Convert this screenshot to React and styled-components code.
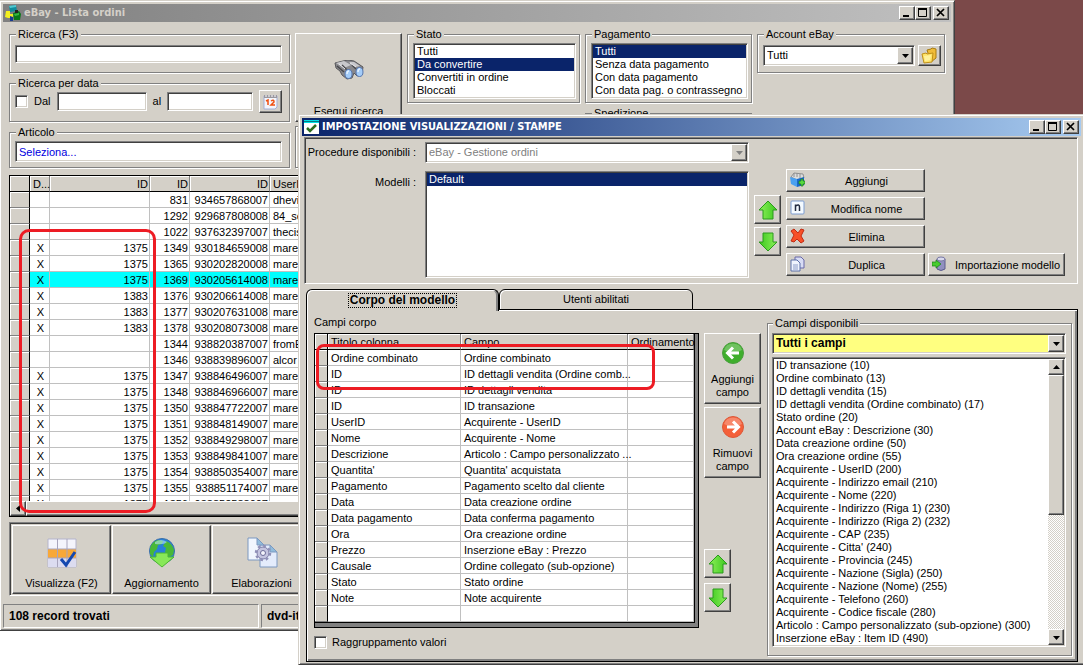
import React from 'react'
import styled, { createGlobalStyle, css } from 'styled-components'

const face = '#d4d0c8'
const navy = '#0a246a'

const GlobalStyle = createGlobalStyle`
  * {
    box-sizing:border-box;
  }
  body {
    margin:0;
    font-family:"Liberation Sans", Arial, sans-serif;
    font-size:11px;
    line-height:13px;
    color:#000;
  }
  button, input, select {
    font:inherit;
    color:inherit;
    margin:0;
    border-radius:0;
  }
  ul {
    list-style:none;
    margin:0;
    padding:0;
  }
`

const raised = css`
  background:${face};
  border:1px solid;
  border-color:#fff #404040 #404040 #fff;
  box-shadow:inset -1px -1px 0 #808080;
`

const sunken = css`
  background:#fff;
  border:1px solid;
  border-color:#808080 #fff #fff #808080;
  box-shadow:inset 1px 1px 0 #404040, inset -1px -1px 0 ${face};
  padding:1px;
`

const Desktop = styled.div`
  position:relative;
  min-height:100vh;
  overflow:hidden;
  background:linear-gradient(to bottom, #7b4949 0 631px, #fff 631px);
`

const Window = styled.section`
  position:absolute;
  display:flex;
  flex-direction:column;
  background:${face};
  border:1px solid;
  border-color:${face} #404040 #404040 ${face};
  box-shadow:inset 1px 1px 0 #fff, inset -1px -1px 0 #808080;
  padding:3px 3px 2px;
`

const MainWindow = styled(Window)`
  left:-1px;
  right:128px;
  top:0;
`

const DialogWindow = styled(Window)`
  left:298px;
  right:-2px;
  top:114px;
`

const TitleBar = styled.header`
  display:flex;
  align-items:center;
  height:18px;
  padding:0 2px;
  gap:3px;
  color:${p => (p.$active ? '#fff' : face)};
  background:${p => (p.$active
    ? 'linear-gradient(to right, #0a246a, #a6caf0)'
    : 'linear-gradient(to right, #808080, #c0c0c0)')};
  h1 {
    flex:1;
    margin:0;
    font-family:"DejaVu Sans Condensed", "Noto Sans", sans-serif;
    font-size:11px;
    line-height:14px;
    font-weight:700;
    white-space:nowrap;
  }
`

const CaptionButtons = styled.div`
  display:flex;
  button:last-child {
    margin-left:2px;
  }
`

const CaptionButton = styled.button`
  ${raised}
  width:16px;
  height:14px;
  padding:0;
  display:flex;
  align-items:center;
  justify-content:center;
`

const Button = styled.button`
  ${raised}
  display:flex;
  flex-direction:${p => (p.$stack ? 'column' : 'row')};
  align-items:center;
  justify-content:center;
  padding:0;
  flex:none;
  width:${p => (p.$w ? `${p.$w}px` : 'auto')};
  height:${p => p.$h}px;
`

const Group = styled.fieldset`
  min-width:0;
  margin:0;
  border:1px solid #808080;
  box-shadow:1px 1px 0 #fff, inset 1px 1px 0 #fff;
  padding:${p => p.$top || 0}px ${p => p.$right || 3}px 3px 5px;
  height:${p => (p.$h ? `${p.$h}px` : 'auto')};
  flex:${p => (p.$grow ? 1 : 'none')};
  legend {
    padding:0 2px;
    margin-left:1px;
    line-height:12px;
    min-height:12px;
    background:${face};
  }
`

const Line = styled.div`
  display:flex;
  align-items:center;
  gap:${p => p.$gap || 0}px;
`

const TextBox = styled.input`
  ${sunken}
  width:${p => (p.$w ? `${p.$w}px` : '100%')};
  height:${p => p.$h}px;
  padding:0 3px;
  color:${p => (p.$link ? '#0000e0' : '#000')};
  outline:none;
`

const Check = styled.input`
  ${sunken}
  appearance:none;
  width:13px;
  height:13px;
  flex:none;
`

const ComboFrame = styled.div`
  ${sunken}
  display:flex;
  flex:1;
  min-width:0;
  height:21px;
  background:${p => p.$fill || '#fff'};
  select {
    appearance:none;
    flex:1;
    min-width:0;
    border:0;
    padding:0 2px;
    background:transparent;
    font-weight:${p => (p.$bold ? 700 : 400)};
    font-size:${p => (p.$bold ? 12 : 11)}px;
    opacity:1;
    outline:none;
  }
  select:disabled {
    color:#808080;
  }
`

const ArrowBox = styled.span`
  ${raised}
  width:16px;
  display:flex;
  align-items:center;
  justify-content:center;
`

const ListFrame = styled.div`
  ${sunken}
  display:flex;
  min-height:${p => p.$h}px;
  ul {
    flex:1;
    min-width:0;
  }
`

const ListItem = styled.li`
  height:13px;
  padding:0 2px;
  white-space:nowrap;
  overflow:hidden;
  background:${p => (p.$on ? navy : 'transparent')};
  color:${p => (p.$on ? '#fff' : '#000')};
`

const MainBody = styled.div`
  display:flex;
  flex-direction:column;
  padding:6px 6px 0;
`

const Filters = styled.div`
  display:grid;
  grid-template-columns:281px 107px 173px 167px 188px;
  column-gap:5px;
  height:140px;
  margin-bottom:7px;
`

const FilterColumn = styled.div`
  display:flex;
  flex-direction:column;
  gap:4px;
  padding-top:${p => p.$top || 0}px;
`

const GridFrame = styled.div`
  border:1px solid #000;
  height:342px;
  display:flex;
  flex-direction:column;
`

const GridView = styled.div`
  flex:1;
  overflow:hidden;
  background:#fff;
`

const DataTable = styled.table`
  table-layout:fixed;
  width:100%;
  border-collapse:separate;
  border-spacing:0;
  background:#fff;
  th, td {
    height:16px;
    padding:1px 1px 0 3px;
    line-height:14px;
    font-weight:400;
    text-align:left;
    white-space:nowrap;
    border-right:1px solid #c0c0c0;
    border-bottom:1px solid #c0c0c0;
  }
  th {
    background:${face};
    box-shadow:inset 1px 1px 0 #fff;
  }
  thead th {
    border-right-color:#808080;
    border-bottom-color:#000;
  }
  th:first-child {
    border-right-color:#000;
  }
  tbody th {
    border-bottom-color:#808080;
  }
  .num {
    text-align:right;
  }
  .mark {
    text-align:center;
  }
`

const Row = styled.tr`
  td {
    background:${p => (p.$on ? '#00ffff' : 'transparent')};
  }
`

const HScroll = styled.div`
  display:flex;
  height:15px;
  background:#e9e7e3;
  button {
    ${raised}
    width:16px;
    padding:0;
    display:flex;
    align-items:center;
    justify-content:center;
  }
  span {
    ${raised}
    flex:1;
  }
`

const Toolbar = styled.div`
  display:flex;
  gap:1px;
  margin-top:5px;
  padding:1px 2px;
  border:1px solid;
  border-color:#808080 #fff #fff #808080;
  box-shadow:inset 1px 1px 0 #404040;
  height:74px;
`

const ToolButton = styled.button`
  ${raised}
  width:99px;
  margin:1px 0 0 0;
  padding:11px 0 0;
  display:flex;
  flex-direction:column;
  align-items:center;
  gap:8px;
`

const SearchButton = styled(ToolButton)`
  width:100%;
  height:89px;
  margin:0;
  padding-top:26px;
  gap:25px;
`

const StatusBar = styled.footer`
  display:flex;
  gap:2px;
  margin-top:8px;
`

const StatusCell = styled.div`
  width:${p => (p.$w ? `${p.$w}px` : 'auto')};
  flex:${p => (p.$w ? 'none' : 1)};
  height:24px;
  padding:5px;
  font-size:12px;
  font-weight:700;
  border:1px solid;
  border-color:#808080 #fff #fff #808080;
`

const Marker = styled.div`
  position:absolute;
  left:${p => p.$x}px;
  top:${p => p.$y}px;
  width:${p => p.$w}px;
  height:${p => p.$h}px;
  border:3px solid #ed1c24;
  border-radius:${p => p.$r}px;
  pointer-events:none;
`

const DialogBody = styled.div`
  padding:1px 3px 0 2px;
`

const ModelPanel = styled.div`
  display:grid;
  grid-template-columns:110px 1fr 27px auto;
  column-gap:5px;
  height:147px;
  padding:4px 12px 0 1px;
  border:1px solid;
  border-color:#808080 #fff #fff #808080;
  box-shadow:inset 1px 1px 0 #404040;
`

const Labels = styled.div`
  display:flex;
  flex-direction:column;
  align-items:flex-end;
  gap:17px;
  padding-top:4px;
  white-space:nowrap;
`

const Fields = styled.div`
  display:flex;
  flex-direction:column;
  gap:8px;
  padding-left:4px;
  > :first-child {
    flex:none;
  }
`

const ButtonStack = styled.div`
  display:flex;
  flex-direction:column;
  gap:${p => p.$gap}px;
  padding-top:${p => p.$top || 0}px;
`

const Actions = styled.div`
  display:grid;
  grid-template-columns:139px 137px;
  grid-auto-rows:23px;
  gap:5px 3px;
  padding-top:27px;
`

const ActionButton = styled.button`
  ${raised}
  grid-column:${p => (p.$side ? 2 : 1)};
  padding:0 0 0 3px;
  display:flex;
  gap:4px;
  white-space:nowrap;
  svg {
    flex:none;
    margin-top:2px;
  }
  span {
    flex:1;
    line-height:22px;
    text-align:center;
  }
`

const Tabs = styled.div`
  display:flex;
  margin:5px 0 0 2px;
  height:20px;
`

const Tab = styled.button`
  position:relative;
  width:${p => (p.$on ? 193 : 194)}px;
  height:${p => (p.$on ? 22 : 21)}px;
  padding:0;
  background:${face};
  border:1px solid #000;
  border-bottom:${p => (p.$on ? '0' : '1px solid #000')};
  border-radius:6px 6px 0 0;
  box-shadow:inset 1px 1px 0 #fff, inset -2px 0 0 ${p => (p.$on ? '#808080' : face)};
  z-index:${p => (p.$on ? 1 : 0)};
  font-size:${p => (p.$on ? 12 : 11)}px;
  font-weight:${p => (p.$on ? 700 : 400)};
  span {
    display:inline-block;
    outline:${p => (p.$on ? '1px dotted #000' : 'none')};
    padding:0 1px;
  }
`

const TabPage = styled.div`
  display:grid;
  grid-template-columns:385px 57px 1fr;
  column-gap:5px;
  margin-left:2px;
  height:353px;
  padding:6px 4px 0 7px;
  border:1px solid #000;
  box-shadow:inset 1px 1px 0 #fff, inset -2px -2px 0 #808080;
`

const FieldsColumn = styled.div`
  h2 {
    margin:0 0 4px;
    font-size:11px;
    font-weight:400;
  }
  > label {
    display:flex;
    align-items:center;
    gap:5px;
    margin-top:8px;
  }
`

const FieldsFrame = styled.div`
  border:1px solid #000;
  background:#808080;
  padding:0 3px 4px 0;
  table {
    border-right:1px solid #000;
    border-bottom:1px solid #000;
  }
`

const MoveColumn = styled.div`
  display:flex;
  flex-direction:column;
  gap:3px;
  padding-top:17px;
`

const Spacer = styled.div`
  height:65px;
`

const MoveButton = styled(Button)`
  gap:8px;
  padding-top:3px;
`

const ButtonLabel = styled.span`
  text-align:center;
`

const AvailableGroup = styled(Group)`
  height:339px;
  margin:1px 1px 0 1px;
  padding:4px 5px 0 4px;
`

const AvailableBody = styled.div`
  display:flex;
  flex-direction:column;
  gap:3px;
  > :first-child {
    flex:none;
  }
`

const VScroll = styled.div`
  width:16px;
  display:flex;
  flex-direction:column;
  background-color:#fff;
  background-image:conic-gradient(${face} 25%, #fff 0 50%, ${face} 0 75%, #fff 0);
  background-size:2px 2px;
  button {
    ${raised}
    height:16px;
    padding:0;
    display:flex;
    align-items:center;
    justify-content:center;
  }
  span {
    ${raised}
    height:140px;
    margin-bottom:auto;
  }
`

const Triangle = ({ d = 'down', color = '#000' }) => {
  const shapes = {
    down: 'M0 2h7L3.5 6z',
    up: 'M0 5h7L3.5 1z',
    left: 'M5 0v7L1 3.5z',
  }
  return (
    <svg width="7" height="7" viewBox="0 0 7 7" aria-hidden="true">
      <path d={shapes[d]} fill={color} />
    </svg>
  )
}

const Arrow = ({ down }) => (
  <svg width="20" height="20" viewBox="0 0 20 20" aria-hidden="true">
    <defs>
      <linearGradient id="arrowFill" x1="0" y1="0" x2="1" y2="0">
        <stop offset="0" stopColor="#8df05a" />
        <stop offset="1" stopColor="#3cc81e" />
      </linearGradient>
    </defs>
    <path
      d="M10 1L19 10H15V19H5V10H1Z"
      transform={down ? 'rotate(180 10 10)' : undefined}
      fill="url(#arrowFill)"
      stroke="#2a9a1c"
      strokeLinejoin="round"
    />
  </svg>
)

const RoundArrow = ({ right }) => (
  <svg width="24" height="24" viewBox="0 0 24 24" aria-hidden="true">
    <circle cx="12" cy="12" r="10.5" fill={right ? '#f4603a' : '#3fae2c'} stroke={right ? '#dd5838' : '#4a9e3e'} />
    <path d="M3 9a9.500 9.500 0 0 1 18 0q-9 5-18 0z" fill="#fff" opacity="0.250" />
    <path
      d="M18 12H7M12 6.500L6.500 12L12 17.500"
      transform={right ? 'rotate(180 12 12)' : undefined}
      fill="none"
      stroke="#fff"
      strokeWidth="3"
    />
  </svg>
)

const AppIcon = () => (
  <svg width="16" height="16" viewBox="0 0 16 16" aria-hidden="true">
    <path d="M4 1l7-1 1 6-7 1z" fill="#108c9c" />
    <path d="M4 1l7-1v2L5 3z" fill="#50c8d0" />
    <path d="M8 8l6-2 2 3-1 6H9z" fill="#087818" />
    <path d="M9 9l5-1v2l-4 1z" fill="#38b840" />
    <path d="M1 6h4v3h3v4H3l-3-1z" fill="#f4f020" />
    <path d="M5 11l3 1v4H5z" fill="#183c90" />
    <path d="M10 5h3v3h-3z" fill="#222" />
  </svg>
)

const FormIcon = () => (
  <svg width="15" height="14" viewBox="0 0 15 14" aria-hidden="true">
    <path d="M0 0h15v14H0z" fill="#fff" />
    <path d="M0 0h15v3H0z" fill="#00e0e8" />
    <path d="M0 1.500h15" stroke="#087880" />
    <path d="M3 8l3 3 6-6" fill="none" stroke="#2c6c20" strokeWidth="2.500" />
  </svg>
)

const CalendarIcon = () => (
  <svg width="15" height="16" viewBox="0 0 15 16" aria-hidden="true">
    <path d="M1 2h13v11l-2 2H1z" fill="#f4f6fc" stroke="#a4b0d8" />
    <path d="M1 1h13v3H1z" fill="#9a98a0" />
    <path d="M3 1v2M6 1v2M9 1v2M12 1v2" stroke="#fff" />
    <path d="M3 7l2-1v5M8 7q3-2 3 1l-3 3h4" fill="none" stroke="#f05010" strokeWidth="1.500" />
  </svg>
)

const BinocularsIcon = () => (
  <svg width="30" height="20" viewBox="0 0 30 20" aria-hidden="true">
    <path d="M1 3L9 1l5-1 6 1 9 6-1 7-5 2-3-3-2 5-5 1-5-4-2-4-4-3z" fill="#88888c" stroke="#58585c" />
    <path d="M2 3l8-2 7 4-7 3zM15 2l5 0 6 4-5 1z" fill="#c8c8cc" />
    <path d="M3 6l7 6M8 5l5 5M18 5l4 4" stroke="#48484c" strokeWidth="1.500" />
    <path d="M5 4l6 5M16 3l6 4" stroke="#e8e8ec" />
    <ellipse cx="14.500" cy="14" rx="3.500" ry="4.500" fill="#a4ccf8" stroke="#5878b0" />
    <ellipse cx="25.500" cy="12" rx="3.500" ry="4.500" fill="#a4ccf8" stroke="#5878b0" />
    <path d="M13 14q0-3 2-3M24 12q0-3 2-3" fill="none" stroke="#e4f2ff" strokeWidth="1.500" />
  </svg>
)

const FolderIcon = () => (
  <svg width="17" height="17" viewBox="0 0 17 17" aria-hidden="true">
    <path d="M6 3l4-1 1-1 4 1v9l-5 4z" fill="#f0bc38" stroke="#a87c10" />
    <path d="M1 7l4-1 1 1 6-1-1 9-8 1z" fill="#ffe468" stroke="#c09018" />
    <path d="M3 9l7-1-1 5-5 1z" fill="#fff29c" />
  </svg>
)

const TableIcon = () => (
  <svg width="30" height="32" viewBox="0 0 30 32" aria-hidden="true">
    <path d="M1 2h28v28H1z" fill="#f4f4fc" stroke="#b4b4cc" />
    <path d="M1 21h28v9H1z" fill="#dcdcf0" />
    <path d="M1 12h28v9H1z" fill="#f8a838" />
    <path d="M10.500 2v28M20 2v28M1 12h28M1 21h28" stroke="#a8a4bc" />
    <path d="M14 22l5 6 9-13" fill="none" stroke="#1448b0" strokeWidth="3" />
  </svg>
)

const GlobeIcon = () => (
  <svg width="30" height="32" viewBox="0 0 30 32" aria-hidden="true">
    <circle cx="15" cy="14" r="12.500" fill="#2880d8" stroke="#3c70a8" />
    <path d="M3 12q1-7 8-9l5 1-1 3-4 1-1 4-3 3-1 5-3-3zM19 4q6 2 8 9l-1 5-4 2-4-5 1-4-3-2z" fill="#48b838" />
    <path d="M8 5q6-4 12 0-3 3-12 2z" fill="#b8e4f8" opacity="0.600" />
    <path d="M9 16h12v4h6L15 30 3 20h6z" fill="#88e858" stroke="#4cb830" />
  </svg>
)

const GearPagesIcon = () => (
  <svg width="32" height="32" viewBox="0 0 32 32" aria-hidden="true">
    <path d="M2 1h9l7 7v15H2z" fill="#f0f6fe" stroke="#7c98c0" />
    <path d="M14 8h10l7 7v15H14z" fill="#e4ecfc" stroke="#7c98c0" />
    <path d="M11 1v7h7zM24 8v7h7z" fill="#90bcdc" stroke="#7c98c0" />
    <circle cx="17" cy="16" r="6" fill="#c4c4e0" stroke="#8080a8" />
    <circle cx="17" cy="16" r="7" fill="none" stroke="#9090b8" strokeWidth="2.500" strokeDasharray="2.700 2.798" />
    <circle cx="17" cy="16" r="2.500" fill="#f4f4fc" stroke="#6c6c98" />
  </svg>
)

const AddIcon = () => (
  <svg width="15" height="16" viewBox="0 0 15 16" aria-hidden="true">
    <path d="M1 5l3-4 9 1 1 4-7 2z" fill="#dcdcdc" stroke="#909090" />
    <path d="M4 1v4M7 1v4M10 2v4" stroke="#909090" />
    <path d="M0 5l7 2v8l-6-3z" fill="#4aa0f0" />
    <path d="M7 7l7-2v8l-7 2z" fill="#1868c8" />
    <path d="M9 9h2V7h2v2h2v3h-2v2h-2v-2H9z" fill="#58d840" stroke="#187818" strokeWidth="0.700" />
  </svg>
)

const RenameIcon = () => (
  <svg width="15" height="16" viewBox="0 0 15 16" aria-hidden="true">
    <rect x="1" y="1" width="13" height="13" rx="1" fill="#f4faff" stroke="#7c9cd0" />
    <path d="M5.500 11V4.500M5.500 6Q9.500 3.500 9.500 7V11" fill="none" stroke="#222c40" strokeWidth="1.500" />
  </svg>
)

const DeleteIcon = () => (
  <svg width="15" height="16" viewBox="0 0 15 16" aria-hidden="true">
    <path d="M1 3l3-2 4 4 3-4 3 1-3 6 3 5-3 2-4-4-3 3-3-1 3-6z" fill="#f85028" stroke="#c02c14" />
  </svg>
)

const CopyIcon = () => (
  <svg width="15" height="16" viewBox="0 0 15 16" aria-hidden="true">
    <path d="M5 1h6l3 3v8H5z" fill="#d8dcf4" stroke="#6868a8" />
    <path d="M1 4h6l3 3v8H1z" fill="#f0f4fe" stroke="#5c70a8" />
    <path d="M3 9h5M3 11h5M3 13h5" stroke="#8c9cc8" />
  </svg>
)

const ImportIcon = () => (
  <svg width="15" height="16" viewBox="0 0 15 16" aria-hidden="true">
    <path d="M5 3v10q4 3 8 0V3z" fill="#9090c0" stroke="#5c5c8c" />
    <ellipse cx="9" cy="3" rx="4" ry="2" fill="#d8d8ec" stroke="#7878a4" />
    <path d="M0 6h4V4l5 4-5 4v-2H0z" fill="#48cc30" stroke="#188018" strokeWidth="0.700" />
  </svg>
)

const ORDERS = [
  ['', '', '831', '934657868007', 'dhevil'],
  ['', '', '1292', '929687808008', '84_serg'],
  ['', '', '1022', '937632397007', 'thecisco'],
  ['X', '1375', '1349', '930184659008', 'marel'],
  ['X', '1375', '1365', '930202820008', 'marel'],
  ['X', '1375', '1369', '930205614008', 'marel'],
  ['X', '1383', '1376', '930206614008', 'marel'],
  ['X', '1383', '1377', '930207631008', 'marel'],
  ['X', '1383', '1378', '930208073008', 'marel'],
  ['', '', '1344', '938820387007', 'fromE'],
  ['', '', '1346', '938839896007', 'alcor'],
  ['X', '1375', '1347', '938846496007', 'marel'],
  ['X', '1375', '1348', '938846966007', 'marel'],
  ['X', '1375', '1350', '938847722007', 'marel'],
  ['X', '1375', '1351', '938848149007', 'marel'],
  ['X', '1375', '1352', '938849298007', 'marel'],
  ['X', '1375', '1353', '938849841007', 'marel'],
  ['X', '1375', '1354', '938850354007', 'marel'],
  ['X', '1375', '1355', '938851174007', 'marel'],
  ['X', '1375', '1356', '938852588007', 'marel'],
]

const BODY_FIELDS = [
  ['Ordine combinato', 'Ordine combinato'],
  ['ID', 'ID dettagli vendita (Ordine comb...'],
  ['ID', 'ID dettagli vendita'],
  ['ID', 'ID transazione'],
  ['UserID', 'Acquirente - UserID'],
  ['Nome', 'Acquirente - Nome'],
  ['Descrizione', 'Articolo : Campo personalizzato ...'],
  ["Quantita'", "Quantita' acquistata"],
  ['Pagamento', 'Pagamento scelto dal cliente'],
  ['Data', 'Data creazione ordine'],
  ['Data pagamento', 'Data conferma pagamento'],
  ['Ora', 'Ora creazione ordine'],
  ['Prezzo', 'Inserzione eBay : Prezzo'],
  ['Causale', 'Ordine collegato (sub-opzione)'],
  ['Stato', 'Stato ordine'],
  ['Note', 'Note acquirente'],
  ['', ''],
]

const AVAILABLE = [
  'ID transazione (10)',
  'Ordine combinato (13)',
  'ID dettagli vendita (15)',
  'ID dettagli vendita (Ordine combinato) (17)',
  'Stato ordine (20)',
  'Account eBay : Descrizione (30)',
  'Data creazione ordine (50)',
  'Ora creazione ordine (55)',
  'Acquirente - UserID (200)',
  'Acquirente - Indirizzo email (210)',
  'Acquirente - Nome (220)',
  'Acquirente - Indirizzo (Riga 1) (230)',
  'Acquirente - Indirizzo (Riga 2) (232)',
  'Acquirente - CAP (235)',
  "Acquirente - Citta' (240)",
  'Acquirente - Provincia (245)',
  'Acquirente - Nazione (Sigla) (250)',
  'Acquirente - Nazione (Nome) (255)',
  'Acquirente - Telefono (260)',
  'Acquirente - Codice fiscale (280)',
  'Articolo : Campo personalizzato (sub-opzione) (300)',
  'Inserzione eBay : Item ID (490)',
]

const Caption = ({ icon, title, active }) => (
  <TitleBar $active={active}>
    {icon}
    <h1>{title}</h1>
    <CaptionButtons>
      <CaptionButton aria-label="Riduci">
        <svg width="12" height="10" viewBox="0 0 12 10"><path d="M2 8h6" stroke="#000" strokeWidth="2" /></svg>
      </CaptionButton>
      <CaptionButton aria-label="Ingrandisci">
        <svg width="12" height="10" viewBox="0 0 12 10"><path d="M1.500 0v8.500h8V0M1 1h9" fill="none" stroke="#000" /><path d="M1 1h9" stroke="#000" strokeWidth="2" /></svg>
      </CaptionButton>
      <CaptionButton aria-label="Chiudi">
        <svg width="12" height="10" viewBox="0 0 12 10"><path d="M2 1l7 7M9 1L2 8" stroke="#000" strokeWidth="1.700" /></svg>
      </CaptionButton>
    </CaptionButtons>
  </TitleBar>
)

const Combo = ({ value, label, id, disabled, bold, fill }) => (
  <ComboFrame $bold={bold} $fill={fill}>
    <select id={id} aria-label={label} disabled={disabled} defaultValue={value}>
      <option>{value}</option>
    </select>
    <ArrowBox aria-hidden="true"><Triangle color={disabled ? '#808080' : '#000'} /></ArrowBox>
  </ComboFrame>
)

const ListBox = ({ items, selected, label, h, children }) => (
  <ListFrame $h={h}>
    <ul role="listbox" aria-label={label}>
      {items.map((item, i) => (
        <ListItem key={item} role="option" aria-selected={i === selected} $on={i === selected}>{item}</ListItem>
      ))}
    </ul>
    {children}
  </ListFrame>
)

const OrdersGrid = () => (
  <GridFrame>
    <GridView>
      <DataTable>
        <colgroup>
          <col style={{ width: 20 }} />
          <col style={{ width: 20 }} />
          <col style={{ width: 100 }} />
          <col style={{ width: 40 }} />
          <col style={{ width: 80 }} />
          <col />
        </colgroup>
        <thead>
          <tr>
            <th />
            <th>D...</th>
            <th className="num">ID</th>
            <th className="num">ID</th>
            <th className="num">ID</th>
            <th>UserID</th>
          </tr>
        </thead>
        <tbody>
          {ORDERS.map(([mark, group, id, item, user], i) => (
            <Row key={id} $on={i === 5}>
              <th />
              <td className="mark">{mark}</td>
              <td className="num">{group}</td>
              <td className="num">{id}</td>
              <td className="num">{item}</td>
              <td>{user}</td>
            </Row>
          ))}
        </tbody>
      </DataTable>
    </GridView>
    <HScroll>
      <button aria-label="Scorri a sinistra"><Triangle d="left" /></button>
      <span />
    </HScroll>
  </GridFrame>
)

const OrdersWindow = () => (
  <MainWindow>
    <Caption icon={<AppIcon />} title="eBay - Lista ordini" />
    <MainBody>
      <Filters>
        <FilterColumn>
          <Group $h={45} $top={5} $right={7}>
            <legend>Ricerca (F3)</legend>
            <TextBox $h={18} aria-label="Ricerca (F3)" />
          </Group>
          <Group $h={45} $top={1} $right={7}>
            <legend>Ricerca per data</legend>
            <Line $gap={6}>
              <Check type="checkbox" id="dal" />
              <label htmlFor="dal">Dal</label>
              <TextBox $w={90} $h={19} aria-label="Data iniziale" />
              <label htmlFor="al">al</label>
              <TextBox $w={86} $h={19} id="al" />
              <Button $w={23} $h={23} aria-label="Calendario"><CalendarIcon /></Button>
            </Line>
          </Group>
          <Group $h={42} $top={3} $right={7}>
            <legend>Articolo</legend>
            <TextBox $h={21} $link defaultValue="Seleziona..." aria-label="Articolo" />
          </Group>
        </FilterColumn>
        <FilterColumn $top={5}>
          <SearchButton>
            <BinocularsIcon />
            Esegui ricerca
          </SearchButton>
          <Group $h={42} />
        </FilterColumn>
        <FilterColumn>
          <Group $top={3}>
            <legend>Stato</legend>
            <ListBox label="Stato" selected={1} h={56} items={['Tutti', 'Da convertire', 'Convertiti in ordine', 'Bloccati']} />
          </Group>
        </FilterColumn>
        <FilterColumn>
          <Group $top={3}>
            <legend>Pagamento</legend>
            <ListBox
              label="Pagamento"
              selected={0}
              h={56}
              items={['Tutti', 'Senza data pagamento', 'Con data pagamento', 'Con data pag. o contrassegno']}
            />
          </Group>
          <Group $grow>
            <legend>Spedizione</legend>
          </Group>
        </FilterColumn>
        <FilterColumn>
          <Group $h={45} $top={5}>
            <legend>Account eBay</legend>
            <Line $gap={3}>
              <Combo label="Account eBay" value="Tutti" />
              <Button $w={23} $h={21} aria-label="Apri account"><FolderIcon /></Button>
            </Line>
          </Group>
        </FilterColumn>
      </Filters>
      <OrdersGrid />
      <Toolbar>
        <ToolButton><TableIcon />Visualizza (F2)</ToolButton>
        <ToolButton><GlobeIcon />Aggiornamento</ToolButton>
        <ToolButton><GearPagesIcon />Elaborazioni</ToolButton>
      </Toolbar>
    </MainBody>
    <StatusBar>
      <StatusCell $w={256}>108 record trovati</StatusCell>
      <StatusCell>dvd-italia</StatusCell>
    </StatusBar>
    <Marker $x={19} $y={228} $w={137} $h={284} $r={10} />
  </MainWindow>
)

const BodyFields = () => (
  <FieldsColumn>
    <h2>Campi corpo</h2>
    <FieldsFrame>
      <DataTable>
        <colgroup>
          <col style={{ width: 13 }} />
          <col style={{ width: 133 }} />
          <col style={{ width: 167 }} />
          <col />
        </colgroup>
        <thead>
          <tr>
            <th />
            <th>Titolo colonna</th>
            <th>Campo</th>
            <th>Ordinamento</th>
          </tr>
        </thead>
        <tbody>
          {BODY_FIELDS.map(([title, field], i) => (
            <Row key={i}>
              <th />
              <td>{title}</td>
              <td>{field}</td>
              <td />
            </Row>
          ))}
        </tbody>
      </DataTable>
    </FieldsFrame>
    <label>
      <Check type="checkbox" />
      Raggruppamento valori
    </label>
  </FieldsColumn>
)

const SettingsWindow = () => (
  <DialogWindow role="dialog" aria-label="Impostazione visualizzazioni / stampe">
    <Caption active icon={<FormIcon />} title="IMPOSTAZIONE VISUALIZZAZIONI / STAMPE" />
    <DialogBody>
      <ModelPanel>
        <Labels>
          <label htmlFor="procedure">Procedure disponibili :</label>
          <span>Modelli :</span>
        </Labels>
        <Fields>
          <Combo id="procedure" value="eBay - Gestione ordini" disabled />
          <ListBox label="Modelli" selected={0} h={107} items={['Default']} />
        </Fields>
        <ButtonStack $gap={3} $top={53}>
          <Button $h={29} aria-label="Sposta modello su"><Arrow /></Button>
          <Button $h={29} aria-label="Sposta modello giù"><Arrow down /></Button>
        </ButtonStack>
        <Actions>
          <ActionButton><AddIcon /><span>Aggiungi</span></ActionButton>
          <ActionButton><RenameIcon /><span>Modifica nome</span></ActionButton>
          <ActionButton><DeleteIcon /><span>Elimina</span></ActionButton>
          <ActionButton><CopyIcon /><span>Duplica</span></ActionButton>
          <ActionButton $side><ImportIcon /><span>Importazione modello</span></ActionButton>
        </Actions>
      </ModelPanel>
      <Tabs role="tablist">
        <Tab role="tab" aria-selected $on><span>Corpo del modello</span></Tab>
        <Tab role="tab" aria-selected={false}><span>Utenti abilitati</span></Tab>
      </Tabs>
      <TabPage>
        <BodyFields />
        <MoveColumn>
          <MoveButton $stack $h={71}><RoundArrow /><ButtonLabel>Aggiungi<br />campo</ButtonLabel></MoveButton>
          <MoveButton $stack $h={71}><RoundArrow right /><ButtonLabel>Rimuovi<br />campo</ButtonLabel></MoveButton>
          <Spacer />
          <ButtonStack $gap={5}>
            <Button $w={27} $h={29} aria-label="Sposta campo su"><Arrow /></Button>
            <Button $w={27} $h={29} aria-label="Sposta campo giù"><Arrow down /></Button>
          </ButtonStack>
        </MoveColumn>
        <AvailableGroup>
          <legend>Campi disponibili</legend>
          <AvailableBody>
            <Combo label="Campi disponibili" value="Tutti i campi" bold fill="#ffff80" />
            <ListBox label="Elenco campi" items={AVAILABLE} h={290}>
              <VScroll>
                <button aria-label="Scorri su"><Triangle d="up" /></button>
                <span />
                <button aria-label="Scorri giù"><Triangle /></button>
              </VScroll>
            </ListBox>
          </AvailableBody>
        </AvailableGroup>
      </TabPage>
    </DialogBody>
    <Marker $x={17} $y={229} $w={339} $h={46} $r={8} />
  </DialogWindow>
)

const App = () => (
  <>
    <GlobalStyle />
    <Desktop>
      <OrdersWindow />
      <SettingsWindow />
    </Desktop>
  </>
)

export default App
